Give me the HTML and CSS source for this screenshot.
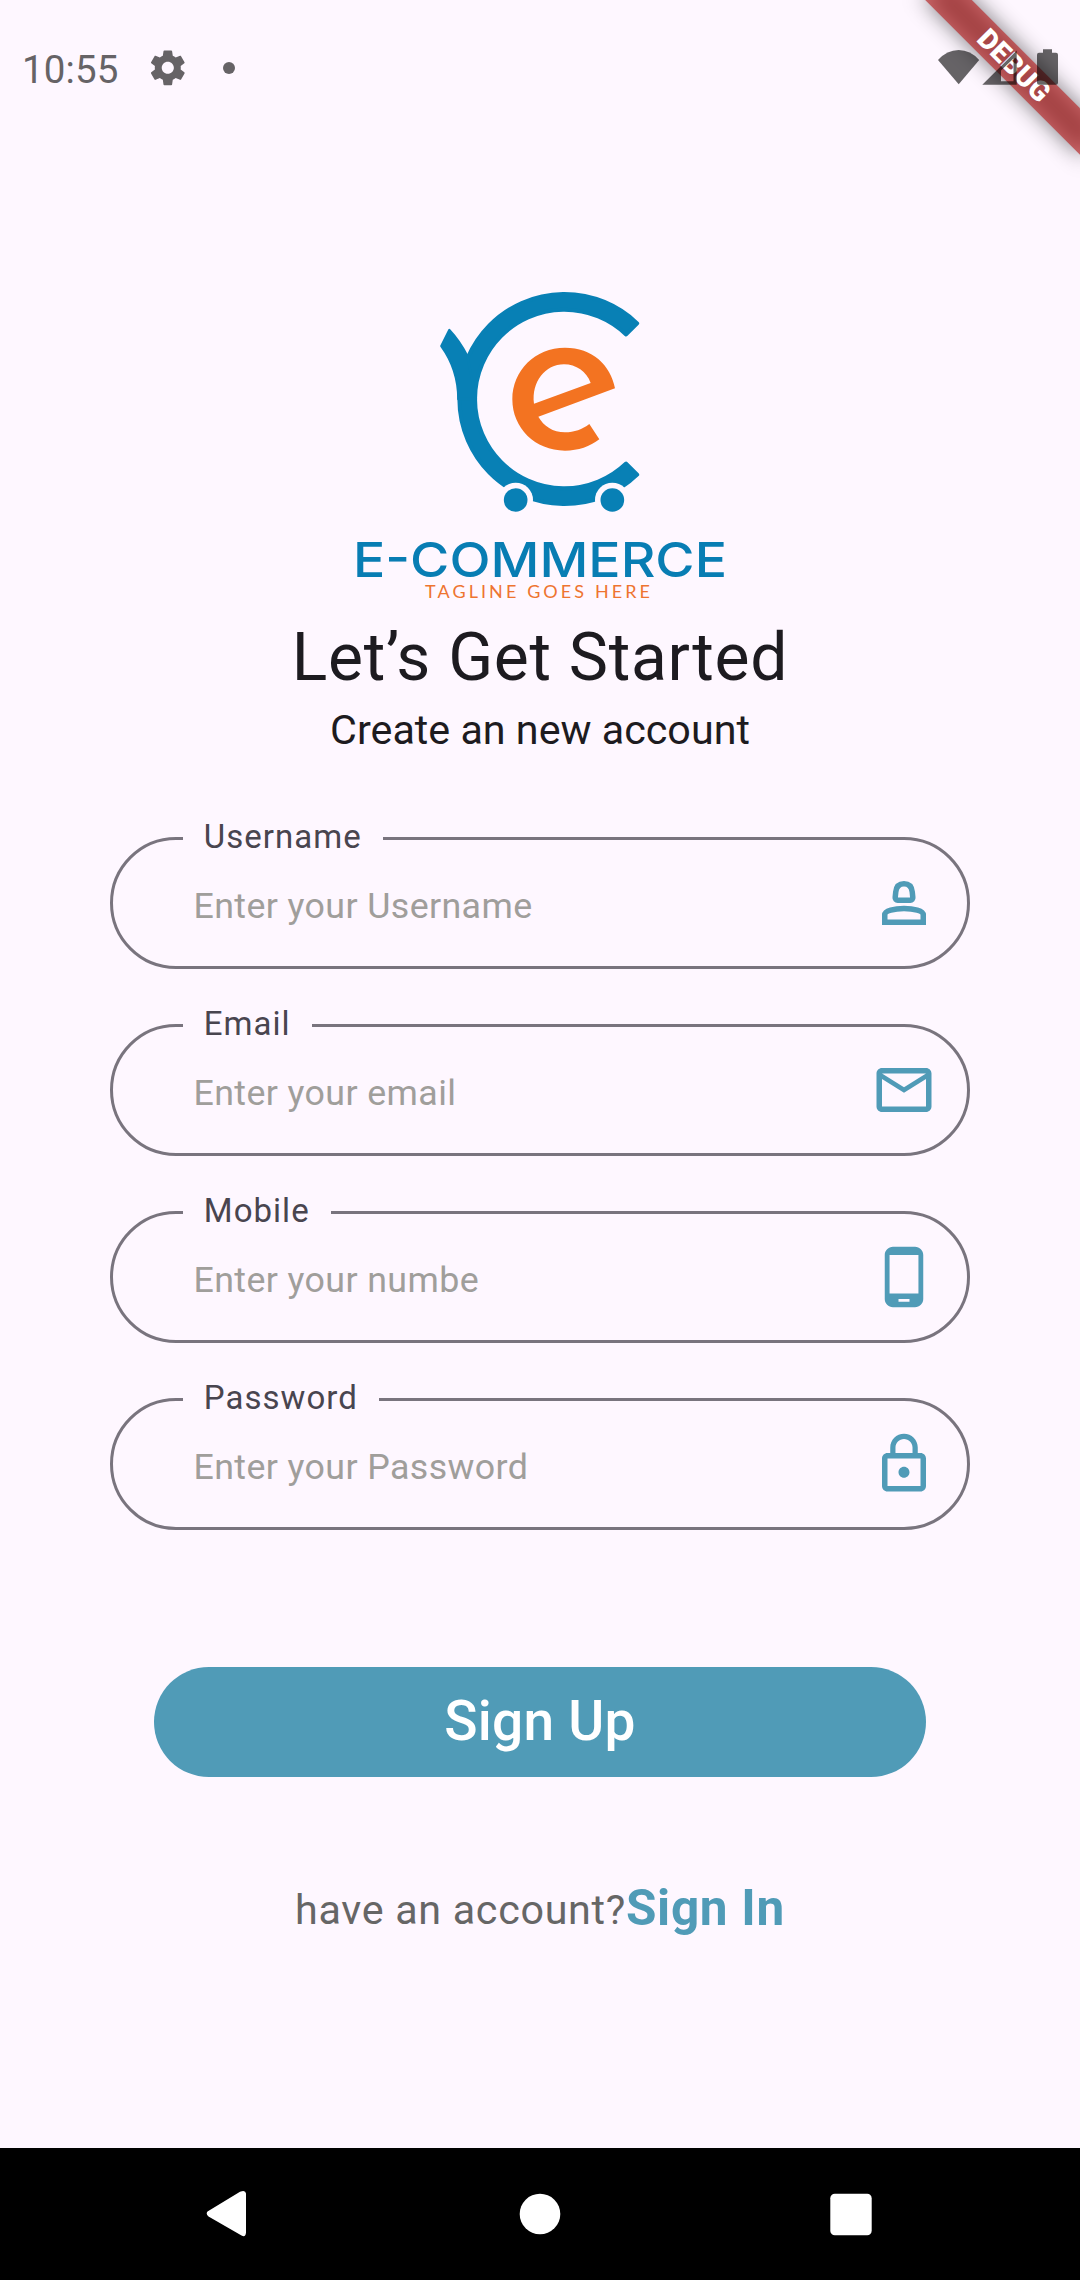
FILE: index.html
```html
<!DOCTYPE html>
<html lang="en">
<head>
<meta charset="utf-8">
<meta name="viewport" content="width=device-width">
<title>Sign Up</title>
<link rel="stylesheet" href="styles.css">
</head>
<body>
<div class="screen">
  <div class="debug-clip">
    <div class="debug-shadow"></div>
    <div class="debug-band">DEBUG</div>
  </div>

  <header class="status-bar">
    <span class="clock">10:55</span>
    <svg class="gear" viewBox="0 0 24 24"><path d="M19.43 12.98c.04-.32.07-.64.07-.98s-.03-.66-.07-.98l2.11-1.65c.19-.15.24-.42.12-.64l-2-3.46c-.12-.22-.39-.3-.61-.22l-2.49 1c-.52-.4-1.08-.73-1.69-.98l-.38-2.65C14.46 2.18 14.25 2 14 2h-4c-.25 0-.46.18-.49.42l-.38 2.65c-.61.25-1.17.59-1.69.98l-2.49-1c-.23-.09-.49 0-.61.22l-2 3.46c-.13.22-.07.49.12.64l2.11 1.65c-.04.32-.07.65-.07.98s.03.66.07.98l-2.11 1.65c-.19.15-.24.42-.12.64l2 3.46c.12.22.39.3.61.22l2.49-1c.52.4 1.08.73 1.69.98l.38 2.65c.03.24.24.42.49.42h4c.25 0 .46-.18.49-.42l.38-2.65c.61-.25 1.17-.59 1.69-.98l2.49 1c.23.09.49 0 .61-.22l2-3.46c.12-.22.07-.49-.12-.64l-2.11-1.65zM12 15.5c-1.93 0-3.5-1.57-3.5-3.5s1.57-3.5 3.5-3.5 3.5 1.57 3.5 3.5-1.57 3.5-3.5 3.5z"/></svg>
    <span class="dot"></span>
    <svg class="system-icons" viewBox="936 46 124 44">
      <path d="M958.7 84.3L938 60Q947 50 958.7 50T979.2 60Z"/>
      <path fill-rule="evenodd" d="M982.3 84.8L1016.7 50.5V84.8ZM1001 81.2H1013.5V58.5L1001 70.5Z"/>
      <path d="M1043 49.3h9v3.4h4a2 2 0 0 1 2 2v28a2 2 0 0 1-2 2h-17a2 2 0 0 1-2-2v-28a2 2 0 0 1 2-2h4z"/>
    </svg>
  </header>

  <main class="content">
    <svg class="logo" viewBox="340 280 400 330">
      <g transform="translate(420 270) scale(.33333)">
        <g class="logo-blue">
          <path class="rounded" d="M651.5 160A315 315 0 1 0 651.5 614L618.3 580.7A268 268 0 1 1 618.3 193.3Z"/>
          <path class="tip" d="M88 180Q119 213 142 258L168 387H115C115 325 98 275 64 228Z"/>
        </g>
        <g class="logo-gap"><circle cx="287" cy="690" r="52"/><circle cx="577" cy="690" r="52"/></g>
        <g class="logo-blue"><circle cx="287" cy="690" r="35.5"/><circle cx="577" cy="690" r="35.5"/></g>
        <path class="logo-orange" fill-rule="evenodd" d="M585 355C572 285 517 233 435 233C345 233 277 302 277 388C277 474 345 542 435 542C475 542 510 530 538 508L508 462C487 478 463 487 435 487C399 487 371 468 355 440ZM342 401C334 335 376 283 432 283C468 283 500 305 512 339Z"/>
      </g>
      <text class="logo-name" x="353" y="576.8" textLength="374" lengthAdjust="spacingAndGlyphs">E-COMMERCE</text>
      <text class="logo-tagline" x="425" y="598" textLength="225">TAGLINE GOES HERE</text>
    </svg>
    <h1 class="title">Let’s Get Started</h1>
    <p class="subtitle">Create an new account</p>

    <form class="form">
      <fieldset class="field">
        <legend>Username</legend>
        <div class="field-row">
          <input type="text" placeholder="Enter your Username">
          <svg class="icon outline" viewBox="0 0 24 24"><path d="M9.7 11h4.6a.9.9 0 0 0 .9-1L15 8C14.8 6 13.7 5 12 5S9.2 6 9 8l-.2 2a.9.9 0 0 0 .9 1zM5 19v-2.700C5 14.800 8.500 14 12 14s7 .8 7 2.300V19z"/></svg>
        </div>
      </fieldset>
      <fieldset class="field">
        <legend>Email</legend>
        <div class="field-row">
          <input type="text" placeholder="Enter your email">
          <svg class="icon" viewBox="0 0 24 24"><path d="M22 6c0-1.100-.9-2-2-2H4c-1.100 0-2 .9-2 2v12c0 1.100.9 2 2 2h16c1.100 0 2-.9 2-2V6zm-2 0l-8 5-8-5h16zm0 12H4V8l8 5 8-5v10z"/></svg>
        </div>
      </fieldset>
      <fieldset class="field">
        <legend>Mobile</legend>
        <div class="field-row">
          <input type="text" placeholder="Enter your numbe">
          <svg class="icon" viewBox="0 0 24 24"><path d="M16 1H8C6.340 1 5 2.340 5 4v16c0 1.660 1.340 3 3 3h8c1.660 0 3-1.340 3-3V4c0-1.660-1.340-3-3-3zm-2 20h-4v-1h4v1zm3.250-3H6.750V4h10.500v14z"/></svg>
        </div>
      </fieldset>
      <fieldset class="field">
        <legend>Password</legend>
        <div class="field-row">
          <input type="text" placeholder="Enter your Password">
          <svg class="icon" viewBox="0 0 24 24"><path d="M12 17c1.100 0 2-.9 2-2s-.9-2-2-2-2 .9-2 2 .9 2 2 2zm6-9h-1V6c0-2.760-2.240-5-5-5S7 3.240 7 6v2H6c-1.100 0-2 .9-2 2v10c0 1.100.9 2 2 2h12c1.100 0 2-.9 2-2V10c0-1.100-.9-2-2-2zM8.900 6c0-1.710 1.390-3.100 3.100-3.100s3.100 1.390 3.100 3.100v2H8.900V6zM18 20H6V10h12v10z"/></svg>
        </div>
      </fieldset>
      <button class="submit" type="button">Sign Up</button>
    </form>

    <p class="signin"><span class="question">have an account?</span><a class="signin-link">Sign In</a></p>
  </main>

  <nav class="nav-bar">
    <svg viewBox="2 0 48 48"><path d="M4.500 21.500L37 1.800Q42.500 -.5 43 3.500V42.500Q42.500 48 38.500 45.500L5.500 26.500Q2.500 24 4.500 21.500Z"/></svg>
    <svg viewBox="0 0 48 48"><circle cx="24" cy="24" r="20.300"/></svg>
    <svg viewBox="0 0 48 48"><rect x="3.300" y="3.700" width="41.400" height="41.600" rx="4.500"/></svg>
  </nav>
</div>
</body>
</html>
```
FILE: styles.css
```css
* { box-sizing: border-box; }

body {
  margin: 0;
  background: #fef7ff;
  font-family: Roboto, "Liberation Sans", sans-serif;
}

.screen {
  position: relative;
  display: flex;
  flex-direction: column;
  width: 1080px;
  height: 2280px;
  overflow: hidden;
  color: #1d1b20;
}

/* Corner banner, laid over the page */
.debug-clip {
  position: absolute;
  top: 0;
  right: 0;
  width: 260px;
  height: 260px;
  overflow: hidden;
}
.debug-shadow,
.debug-band {
  position: absolute;
  left: 84px;
  top: 49px;
  width: 220px;
  height: 33px;
  transform: rotate(45deg);
}
.debug-shadow {
  background: rgba(0, 0, 0, .5);
  filter: blur(11px);
}
.debug-band {
  background: rgba(183, 28, 28, .627);
  color: #fff;
  font-size: 28px;
  font-weight: 900;
  line-height: 33px;
  text-align: center;
}

.status-bar {
  position: relative;
  display: flex;
  align-items: center;
  height: 135px;
  padding: 0 22px;
  color: #666366;
}
.clock {
  width: 96px;
  padding-top: 4px;
  font-size: 38.5px;
  letter-spacing: .1px;
  line-height: 45px;
}
.gear {
  width: 41.6px;
  height: 41.6px;
  margin-left: 29px;
  fill: #666366;
}
.dot {
  width: 12px;
  height: 12px;
  margin-left: 34.4px;
  border-radius: 50%;
  background: #666366;
}
.system-icons {
  width: 124px;
  height: 44px;
  margin-left: auto;
  margin-right: -2px;
  fill: rgba(0, 0, 0, .6);
}

.content {
  flex: 1;
  display: flex;
  flex-direction: column;
  align-items: center;
}

.logo {
  width: 400px;
  height: 330px;
  margin-top: 145px;
}
.logo-blue { fill: #0880b5; }
.logo-gap { fill: #fef7ff; }
.logo-orange { fill: #f37321; }
.rounded {
  stroke: #0880b5;
  stroke-width: 12;
  stroke-linejoin: round;
}
.tip {
  stroke: #0880b5;
  stroke-width: 7;
  stroke-linejoin: round;
}
.logo-name {
  fill: #087db3;
  font-family: Inter, "Open Sans", sans-serif;
  font-size: 48.6px;
  font-weight: 500;
}
.logo-tagline {
  fill: #ee7430;
  font-family: Lato, sans-serif;
  font-size: 18px;
}

.title {
  margin: 7px 0 0;
  font-size: 66px;
  font-weight: 400;
  letter-spacing: .69px;
  line-height: 81px;
}
.subtitle {
  margin: 8px 0 0;
  font-size: 41.25px;
  line-height: 49px;
}

.form {
  display: flex;
  flex-direction: column;
  gap: 36px;
  width: 860px;
  margin-top: 63px;
}
.field {
  height: 151px;
  min-width: 0;
  margin: 0;
  padding: 0;
  border: 3px solid #79747e;
  border-radius: 66px;
}
.field legend {
  height: 41px;
  margin-left: 70px;
  padding: 0 21.6px 4px 20.8px;
  color: #49454f;
  font-size: 33px;
  letter-spacing: 1.03px;
  line-height: 37px;
}
.field-row {
  display: flex;
  align-items: center;
  height: 88px;
  padding: 0 30px 0 80.5px;
}
.field input {
  flex: 1;
  min-width: 0;
  height: 60px;
  padding: 6px 0 0;
  border: 0;
  outline: 0;
  background: none;
  color: #1d1b20;
  font: 400 35.75px Roboto, "Liberation Sans", sans-serif;
  letter-spacing: .39px;
}
.field input::placeholder {
  color: #a09e9b;
  opacity: 1;
}
.icon {
  width: 66px;
  height: 66px;
  fill: #509bb7;
}
.icon.outline {
  fill: none;
  stroke: #509bb7;
  stroke-width: 2;
}

.submit {
  align-self: center;
  width: 772px;
  height: 110px;
  margin-top: 101px;
  padding: 0 0 2px;
  border: 0;
  border-radius: 55px;
  background: #509bb7;
  color: #fff;
  font: 500 55px Roboto, "Liberation Sans", sans-serif;
  letter-spacing: .28px;
}

.signin {
  display: flex;
  align-items: center;
  height: 60px;
  margin: 101px 0 0;
}
.question {
  padding-top: 3px;
  color: #666;
  font-size: 41.25px;
  letter-spacing: .69px;
}
.signin-link {
  color: #509bb7;
  font-size: 49.5px;
  font-weight: 700;
  letter-spacing: .69px;
}

.nav-bar {
  display: grid;
  grid-template-columns: repeat(3, 311px);
  align-items: center;
  justify-content: center;
  justify-items: center;
  height: 132px;
  background: #000;
}
.nav-bar svg {
  width: 48px;
  height: 48px;
  fill: #fff;
}
```
